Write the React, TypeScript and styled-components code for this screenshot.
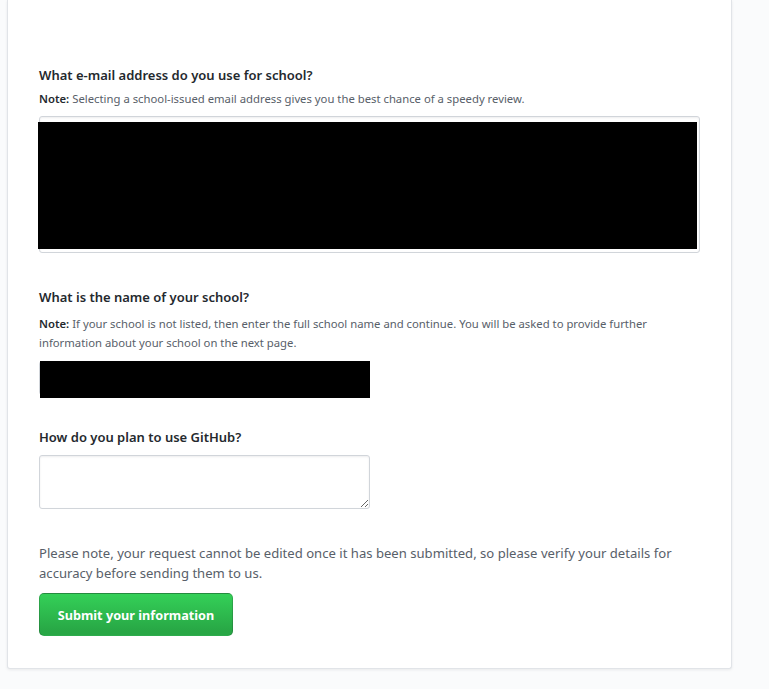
import React from 'react';
import styled, { createGlobalStyle } from 'styled-components';

const GlobalStyle = createGlobalStyle`
  html,
  body {
    margin: 0;
    background: #fafbfc;
  }

  body {
    font-family: 'Noto Sans', 'Open Sans', Arial, sans-serif;
    color: #24292e;
  }
`;

const Page = styled.div`
  padding: 0 37px 21px 7px;
`;

const Card = styled.div`
  background: #fff;
  border: 1px solid #e1e4e8;
  border-top: 0;
  border-radius: 0 0 3px 3px;
  box-shadow: 0 1px 3px rgba(27, 31, 35, 0.08);
  padding: 65px 31px 32px 31px;
`;

const FormGroup = styled.div<{ $gap?: number }>`
  margin-bottom: ${(p) => p.$gap ?? 32}px;
`;

const Label = styled.div`
  font-size: 13px;
  font-weight: 600;
  line-height: 20px;
  color: #24292e;
`;

const Note = styled.p<{ $top: number }>`
  margin: ${(p) => p.$top}px 0 0;
  font-size: 11.3px;
  line-height: 19px;
  color: #586069;
  max-width: 661px;
`;

const NoteLabel = styled.strong`
  color: #24292e;
  font-weight: 600;
  margin-right: 3px;
`;

const SelectBox = styled.div`
  position: relative;
  margin-top: 8px;
  width: 661px;
  height: 137px;
  box-sizing: border-box;
  border: 1px solid #d1d5da;
  border-radius: 3px;
  background: #fff;
  box-shadow: inset 0 1px 2px rgba(27, 31, 35, 0.075);
`;

const Redaction = styled.div<{ $top: number; $left: number; $w: number; $h: number }>`
  position: absolute;
  top: ${(p) => p.$top}px;
  left: ${(p) => p.$left}px;
  width: ${(p) => p.$w}px;
  height: ${(p) => p.$h}px;
  background: #000;
`;

const InputWrap = styled.div`
  position: relative;
  margin-top: 9px;
  width: 331px;
  height: 37px;
`;

const TextInput = styled.input`
  display: block;
  width: 331px;
  height: 34px;
  box-sizing: border-box;
  border: 1px solid #d1d5da;
  border-radius: 3px;
  background: #fff;
`;

const TextArea = styled.textarea`
  display: block;
  margin-top: 8px;
  width: 331px;
  height: 54px;
  box-sizing: border-box;
  border: 1px solid #d1d5da;
  border-radius: 3px;
  background: #fff;
  box-shadow: inset 0 1px 2px rgba(27, 31, 35, 0.075);
  resize: vertical;
  font: inherit;
`;

const Disclaimer = styled.p`
  margin: 0 0 10px;
  font-size: 13.1px;
  line-height: 20px;
  color: #586069;
`;

const SubmitButton = styled.button`
  display: block;
  width: 194px;
  height: 43px;
  padding: 0;
  border: 1px solid rgba(27, 31, 35, 0.2);
  border-radius: 5px;
  background: linear-gradient(-180deg, #34d058 0%, #28a745 90%);
  color: #fff;
  font-family: inherit;
  font-size: 12.7px;
  font-weight: 700;
  cursor: pointer;
`;

export default function App() {
  return (
    <>
      <GlobalStyle />
      <Page>
        <Card>
          <FormGroup $gap={34}>
            <Label>What e-mail address do you use for school?</Label>
            <Note $top={4}>
              <NoteLabel>Note:</NoteLabel>Selecting a school-issued email address gives you the best chance of a
              speedy review.
            </Note>
            <SelectBox>
              <Redaction $top={5} $left={-2} $w={659} $h={127} />
            </SelectBox>
          </FormGroup>

          <FormGroup $gap={29}>
            <Label>What is the name of your school?</Label>
            <Note $top={7}>
              <NoteLabel>Note:</NoteLabel>If your school is not listed, then enter the full school name and continue.
              You will be asked to provide further information about your school on the next page.
            </Note>
            <InputWrap>
              <TextInput type="text" aria-label="School name" />
              <Redaction $top={0} $left={1} $w={330} $h={37} />
            </InputWrap>
          </FormGroup>

          <FormGroup $gap={34}>
            <Label>How do you plan to use GitHub?</Label>
            <TextArea aria-label="How do you plan to use GitHub?" />
          </FormGroup>

          <Disclaimer>
            Please note, your request cannot be edited once it has been submitted, so please verify your details for
            accuracy before sending them to us.
          </Disclaimer>
          <SubmitButton type="submit">Submit your information</SubmitButton>
        </Card>
      </Page>
    </>
  );
}
